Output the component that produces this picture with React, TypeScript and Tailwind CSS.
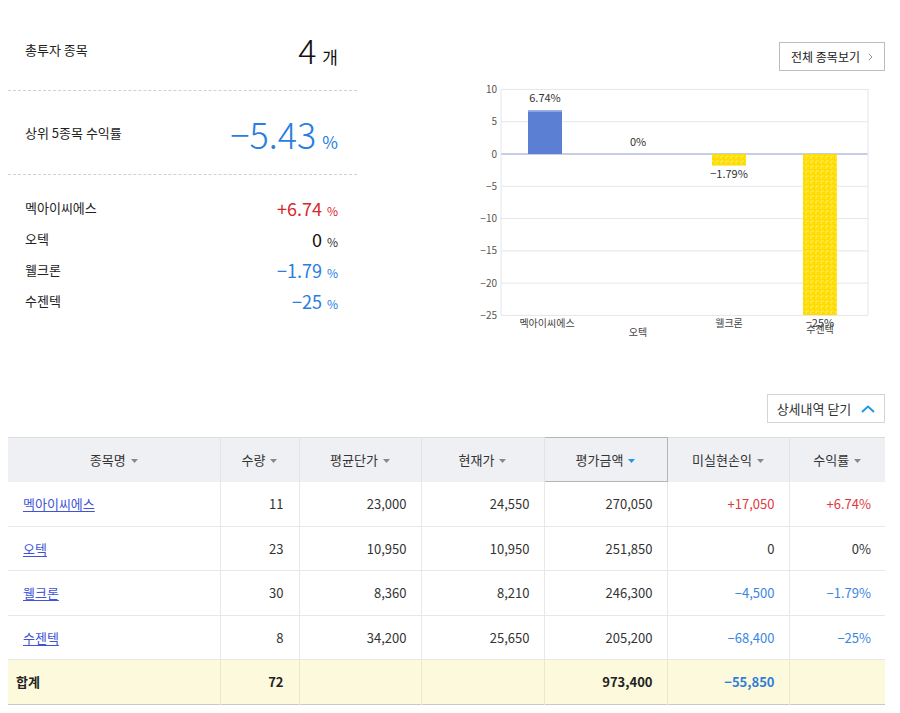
import React from 'react';

const FONT = { fontFamily: '"Noto Sans CJK KR", "Noto Sans", sans-serif' };

const summaryRows = [
  { name: '멕아이씨에스', value: '+6.74', tone: 'up' },
  { name: '오텍', value: '0', tone: 'flat' },
  { name: '웰크론', value: '-1.79', tone: 'down' },
  { name: '수젠텍', value: '-25', tone: 'down' },
];

const toneText = (tone: string) =>
  tone === 'up' ? 'text-[#d9262a]' : tone === 'down' ? 'text-[#2a7de1]' : 'text-[#111]';

const tableRows = [
  { name: '멕아이씨에스', qty: '11', avg: '23,000', cur: '24,550', amount: '270,050', pl: '+17,050', rate: '+6.74%', tone: 'up' },
  { name: '오텍', qty: '23', avg: '10,950', cur: '10,950', amount: '251,850', pl: '0', rate: '0%', tone: 'flat' },
  { name: '웰크론', qty: '30', avg: '8,360', cur: '8,210', amount: '246,300', pl: '-4,500', rate: '-1.79%', tone: 'down' },
  { name: '수젠텍', qty: '8', avg: '34,200', cur: '25,650', amount: '205,200', pl: '-68,400', rate: '-25%', tone: 'down' },
];

const cellTone = (tone: string) =>
  tone === 'up' ? 'text-[#e0383b]' : tone === 'down' ? 'text-[#3b86dd]' : 'text-[#333]';

const Caret: React.FC<{ active?: boolean }> = ({ active }) => (
  <svg width="7" height="4" viewBox="0 0 7 4" className="inline-block ml-[5px] align-middle">
    <path d="M0 0 H7 L3.5 4 Z" fill={active ? '#1e9be0' : '#888'} />
  </svg>
);

const Chart: React.FC = () => {
  const zero = 74;
  const unit = 6.457;
  const yTicks = [10, 5, 0, -5, -10, -15, -20, -25];
  const y = (v: number) => zero - v * unit;
  return (
    <svg width="415" height="270" viewBox="0 0 415 270" style={FONT}>
      <defs>
        <pattern id="yel" width="5" height="5" patternUnits="userSpaceOnUse">
          <rect width="5" height="5" fill="#ffdc00" />
          <path d="M1 1 H4 M1 1 V4" stroke="#fff07a" strokeWidth="0.8" />
        </pattern>
      </defs>
      {yTicks.map((t) => (
        <g key={t}>
          <line x1="31" x2="398" y1={y(t)} y2={y(t)} stroke={t === 0 ? '#8e9cc8' : '#e4e6ee'} strokeWidth="1" />
          <text x="27" y={y(t) + 3.5} textAnchor="end" fontSize="10" fill="#555">
            {t < 0 ? `−${-t}` : t}
          </text>
        </g>
      ))}
      <line x1="31" x2="31" y1="9" y2="235" stroke="#e4e6ee" />
      <line x1="398" x2="398" y1="9" y2="235" stroke="#e4e6ee" />

      <rect x="58" y={y(6.74)} width="34" height={zero - y(6.74)} fill="#5b80d3" />
      <rect x="58" y={y(6.74)} width="34" height="1.5" fill="#8ea6e2" />
      <rect x="242" y={zero} width="34" height={1.79 * unit} fill="url(#yel)" />
      <rect x="333" y={zero} width="34" height={235 - zero} fill="url(#yel)" />

      <text x="75" y="22" textAnchor="middle" fontSize="11" fill="#333">6.74%</text>
      <text x="168" y="66" textAnchor="middle" fontSize="11" fill="#333">0%</text>
      <text x="259" y="98" textAnchor="middle" fontSize="11" fill="#333">−1.79%</text>
      <text x="350" y="247" textAnchor="middle" fontSize="11" fill="#333">−25%</text>

      <text x="77" y="247" textAnchor="middle" fontSize="10" fill="#444">멕아이씨에스</text>
      <text x="168" y="256" textAnchor="middle" fontSize="10" fill="#444">오텍</text>
      <text x="259" y="247" textAnchor="middle" fontSize="10" fill="#444">웰크론</text>
      <text x="350" y="253" textAnchor="middle" fontSize="10" fill="#444">수젠텍</text>
    </svg>
  );
};

export default function App() {
  const headers = ['종목명', '수량', '평균단가', '현재가', '평가금액', '미실현손익', '수익률'];
  return (
    <div className="w-[900px] min-h-[713px] bg-white pt-[10px]" style={FONT}>
      <div className="w-[877px] ml-2">
        <div className="flex justify-between items-start">
          <div className="w-[349px]">
            <div className="h-[81px] flex items-center justify-between pl-[17px] pr-[19px] border-b border-dashed border-[#d0d0d0]">
              <span className="text-[13px] text-[#222]">총투자 종목</span>
              <span className="flex items-baseline gap-[6px] text-[#111]">
                <span className="text-[34px] leading-none font-light">4</span>
                <span className="text-[17px] leading-none">개</span>
              </span>
            </div>
            <div className="h-[84px] flex items-center justify-between pl-[17px] pr-[19px] border-b border-dashed border-[#d0d0d0]">
              <span className="text-[13px] text-[#222]">상위 5종목 수익률</span>
              <span className="flex items-baseline gap-[6px] text-[#2a7de1]">
                <span className="text-[36px] leading-none font-light">−5.43</span>
                <span className="text-[17px] leading-none">%</span>
              </span>
            </div>
            <div className="pt-[17px]">
              {summaryRows.map((r) => (
                <div key={r.name} className="h-[31px] flex items-center justify-between pl-[17px] pr-[19px]">
                  <span className="text-[13px] text-[#222]">{r.name}</span>
                  <span className={`flex items-baseline gap-[5px] ${toneText(r.tone)}`}>
                    <span className="text-[18px] leading-none">{r.value.replace('-', '−')}</span>
                    <span className={`text-[12px] leading-none ${r.tone === 'flat' ? 'text-[#333]' : ''}`}>%</span>
                  </span>
                </div>
              ))}
            </div>
          </div>

          <div className="w-[415px] flex flex-col pt-[32px]">
            <button className="self-end w-[106px] h-[29px] border border-[#bdbdbd] bg-white flex items-center justify-center gap-[8px] text-[12px] text-[#222]">
              <span>전체 종목보기</span>
              <svg width="5" height="8" viewBox="0 0 5 8">
                <path d="M0.8 0.8 L4 4 L0.8 7.2" stroke="#999" strokeWidth="1" fill="none" />
              </svg>
            </button>
            <div className="mt-[9px]">
              <Chart />
            </div>
          </div>
        </div>

        <div className="flex justify-end mt-[44px]">
          <button className="w-[118px] h-[29px] border border-[#d5d5d5] bg-white flex items-center justify-center gap-[10px] text-[13px] text-[#333]">
            <span>상세내역 닫기</span>
            <svg width="14" height="8" viewBox="0 0 14 8">
              <path d="M1 7 L7 1.5 L13 7" stroke="#1e9be0" strokeWidth="2" fill="none" />
            </svg>
          </button>
        </div>

        <table className="mt-[14px] w-[877px] table-fixed border-collapse text-[13px] text-[#333]">
          <colgroup>
            <col className="w-[212px]" />
            <col className="w-[79px]" />
            <col className="w-[122px]" />
            <col className="w-[123px]" />
            <col className="w-[123px]" />
            <col className="w-[122px]" />
            <col className="w-[96px]" />
          </colgroup>
          <thead>
            <tr className="h-[44px] bg-[#eff0f3] border-t border-[#dcdcdc]">
              {headers.map((h, i) => (
                <th
                  key={h}
                  className={`font-normal text-[13px] text-[#333] border-l border-r ${
                    i === 4 ? 'border border-[#b5b5b5]' : 'border-[#e2e3e6]'
                  } ${i === 0 ? 'border-l-0' : ''} ${i === 6 ? 'border-r-0' : ''}`}
                >
                  {h}
                  <Caret active={i === 4} />
                </th>
              ))}
            </tr>
          </thead>
          <tbody>
            {tableRows.map((r) => (
              <tr key={r.name} className="h-[44.5px] border-b border-[#e8e8e8]">
                <td className="pl-[15px]">
                  <a href="#" className="text-[#4153d6] underline underline-offset-2">{r.name}</a>
                </td>
                <td className="text-right pr-[15px] border-l border-[#e8e8e8]">{r.qty}</td>
                <td className="text-right pr-[14px] border-l border-[#e8e8e8]">{r.avg}</td>
                <td className="text-right pr-[14px] border-l border-[#e8e8e8]">{r.cur}</td>
                <td className="text-right pr-[14px] border-l border-[#e8e8e8]">{r.amount}</td>
                <td className={`text-right pr-[14px] border-l border-[#e8e8e8] ${cellTone(r.tone)}`}>{r.pl.replace('-', '−')}</td>
                <td className={`text-right pr-[14px] border-l border-[#e8e8e8] ${cellTone(r.tone)}`}>{r.rate.replace('-', '−')}</td>
              </tr>
            ))}
            <tr className="h-[45px] bg-[#fdf9dc] border-b border-[#c8c8c8] font-bold text-[#222]">
              <td className="pl-[8px]">합계</td>
              <td className="text-right pr-[15px] border-l border-[#ebe8d2]">72</td>
              <td className="border-l border-[#ebe8d2]"></td>
              <td className="border-l border-[#ebe8d2]"></td>
              <td className="text-right pr-[14px] border-l border-[#ebe8d2]">973,400</td>
              <td className="text-right pr-[14px] border-l border-[#ebe8d2] text-[#2f7fd8]">−55,850</td>
              <td className="border-l border-[#ebe8d2]"></td>
            </tr>
          </tbody>
        </table>
      </div>
    </div>
  );
}
